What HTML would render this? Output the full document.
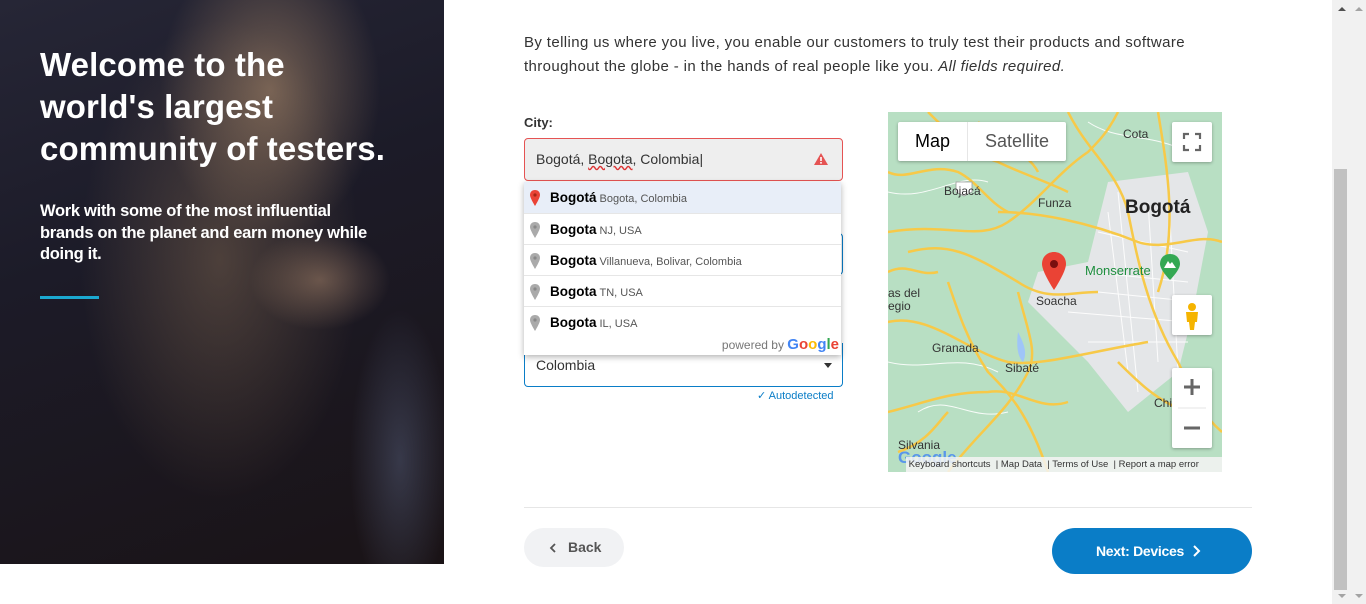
<!DOCTYPE html>
<html><head><meta charset="utf-8"><style>
*{box-sizing:border-box;margin:0;padding:0}
body{width:1366px;height:604px;overflow:hidden;background:#fff;font-family:"Liberation Sans",sans-serif;position:relative;color:#222}
.left{position:absolute;left:0;top:0;width:444px;height:564px;overflow:hidden;
background:radial-gradient(ellipse 110px 150px at 270px 90px,rgba(200,160,120,.5),transparent),
radial-gradient(ellipse 140px 240px at 220px 260px,rgba(150,120,90,.4),transparent),
radial-gradient(ellipse 70px 50px at 320px 280px,rgba(190,150,120,.45),transparent),
radial-gradient(ellipse 50px 150px at 400px 460px,rgba(90,100,130,.45),transparent),
linear-gradient(160deg,#262636 0%,#1c1b28 40%,#1a1316 100%)}
.left h1{position:absolute;left:40px;top:44px;color:#fff;font-size:33px;line-height:42px;font-weight:bold;letter-spacing:.1px}
.left p{position:absolute;left:40px;top:201px;color:#fff;font-size:16.5px;line-height:21.5px;font-weight:bold;white-space:nowrap;letter-spacing:-.3px}
.left .bar{position:absolute;left:40px;top:296px;width:59px;height:3px;background:#1ba8d0}
.intro{position:absolute;left:524px;top:31px;font-size:15px;line-height:24px;color:#333;width:700px;letter-spacing:.38px}
.lbl{position:absolute;left:524px;top:115px;font-size:13px;font-weight:bold;color:#333}
.city{position:absolute;left:524px;top:138px;width:319px;height:43px;border:1px solid #e55353;border-radius:4px;background:#eee;font-size:14px;padding:12px 11px;color:#333}
.warn{position:absolute;right:14px;top:14px}
.under{position:absolute;left:524px;top:233px;width:319px;height:42px;border:1px solid #0a7dc7;border-radius:4px}
.country{position:absolute;left:524px;top:343px;width:319px;height:44px;border:1px solid #0a7dc7;border-top:none;border-radius:0 0 4px 4px;font-size:14px;padding:14px 11px 0;color:#333}
.country .arr{position:absolute;right:10px;top:20px;border:4px solid transparent;border-top:5px solid #333}
.auto{position:absolute;left:757px;top:389px;font-size:11px;color:#0a7dc7}
.dd{position:absolute;left:524px;top:182px;width:317px;height:173px;background:#fff;box-shadow:0 2px 6px rgba(0,0,0,.3);font-size:11px;color:#555}
.it{height:31px;border-top:1px solid #e6e6e6;position:relative;padding-left:26px;line-height:31px}
.it:first-child{border-top:none;background:#e8eef8}
.it b{font-size:13.5px;color:#000;font-weight:bold;margin-right:3px}
.it svg{position:absolute;left:6px;top:8px}
.pw{position:absolute;right:2px;bottom:2px;font-size:12px;color:#777}
.pw span{font-size:15px;font-weight:bold}
.map{position:absolute;left:888px;top:112px;width:334px;height:360px;overflow:hidden;background:#b8dfc3}
.btn{position:absolute;background:#fff;box-shadow:0 1px 3px rgba(0,0,0,.3);border-radius:2px}
.hr{position:absolute;left:524px;top:507px;width:728px;height:1px;background:#e6e6e6}
.back{position:absolute;left:524px;top:528px;width:100px;height:39px;border-radius:20px;background:#f1f2f4;font-size:14px;font-weight:bold;color:#555;line-height:39px;padding-left:44px}
.next{position:absolute;left:1052px;top:528px;width:200px;height:46px;border-radius:23px;background:#0a7dc7;color:#fff;font-size:14px;font-weight:bold;line-height:46px;padding-left:44px;letter-spacing:-.3px}
.sb{position:absolute;left:1332px;top:0;width:34px;height:604px;background:#f1f1f1}
.thumb{position:absolute;left:1334px;top:169px;width:13px;height:421px;background:#c1c1c1}
.lb{position:absolute;font-size:12px;color:#333}
</style></head><body>
<div class="left">
<h1>Welcome to the<br>world's largest<br>community of testers.</h1>
<p>Work with some of the most influential<br>brands on the planet and earn money while<br>doing it.</p>
<div class="bar"></div>
</div>
<div class="intro">By telling us where you live, you enable our customers to truly test their products and software throughout the globe - in the hands of real people like you. <i>All fields required.</i></div>
<div class="lbl">City:</div>
<div class="under"></div>
<div class="city">Bogotá, <span style="text-decoration:underline wavy #d33">Bogota</span>, Colombia|
<svg class="warn" width="14" height="12" viewBox="0 0 14 12"><path d="M7 0L14 12H0Z" fill="#e55353"/><rect x="6.2" y="4" width="1.6" height="4" fill="#fff"/><rect x="6.2" y="9" width="1.6" height="1.6" fill="#fff"/></svg></div>
<div class="country">Colombia<div class="arr"></div></div>
<div class="auto">✓ Autodetected</div>
<div class="dd">
<div class="it"><svg width="10" height="16" viewBox="0 0 10 16"><path d="M5 0C2 0 0 2 0 5c0 3 5 11 5 11s5-8 5-11C10 2 8 0 5 0z" fill="#ea4335"/><circle cx="5" cy="5" r="1.6" fill="#a52714"/></svg><b>Bogotá</b>Bogota, Colombia</div>
<div class="it"><svg width="10" height="16" viewBox="0 0 10 16"><path d="M5 0C2 0 0 2 0 5c0 3 5 11 5 11s5-8 5-11C10 2 8 0 5 0z" fill="#aaa"/><circle cx="5" cy="5" r="1.6" fill="#888"/></svg><b>Bogota</b>NJ, USA</div>
<div class="it"><svg width="10" height="16" viewBox="0 0 10 16"><path d="M5 0C2 0 0 2 0 5c0 3 5 11 5 11s5-8 5-11C10 2 8 0 5 0z" fill="#aaa"/><circle cx="5" cy="5" r="1.6" fill="#888"/></svg><b>Bogota</b>Villanueva, Bolivar, Colombia</div>
<div class="it"><svg width="10" height="16" viewBox="0 0 10 16"><path d="M5 0C2 0 0 2 0 5c0 3 5 11 5 11s5-8 5-11C10 2 8 0 5 0z" fill="#aaa"/><circle cx="5" cy="5" r="1.6" fill="#888"/></svg><b>Bogota</b>TN, USA</div>
<div class="it"><svg width="10" height="16" viewBox="0 0 10 16"><path d="M5 0C2 0 0 2 0 5c0 3 5 11 5 11s5-8 5-11C10 2 8 0 5 0z" fill="#aaa"/><circle cx="5" cy="5" r="1.6" fill="#888"/></svg><b>Bogota</b>IL, USA</div>
<div class="pw">powered by <span><span style="color:#4285f4">G</span><span style="color:#ea4335">o</span><span style="color:#fbbc05">o</span><span style="color:#4285f4">g</span><span style="color:#34a853">l</span><span style="color:#ea4335">e</span></span></div>
</div>
<div class="map">
<svg width="334" height="360" style="position:absolute;left:0;top:0">
<path d="M220 70 L300 60 L320 120 L305 200 L290 260 L240 300 L200 250 L140 190 L150 160 L200 150 Z" fill="#e4e6e8"/>
<g fill="none" stroke="#fff" stroke-width="1" opacity=".9">
<path d="M210 120 L300 140 M200 160 L300 170 M220 100 L240 260 M260 90 L270 250 M180 200 L300 210 M230 80 L250 280 M200 230 L300 230 M280 70 L290 260 M210 180 L310 190"/>
<path d="M0 80 C40 90 70 60 100 70 M20 40 C60 50 90 20 130 30 M0 250 C40 260 70 240 110 260 M30 300 C60 280 80 310 120 300 M200 10 C230 30 260 20 300 40"/>
</g>
<g fill="none" stroke="#f7c948" stroke-width="2.5">
<path d="M0 120 C60 110 90 130 120 110 C150 90 170 60 200 40 C210 30 220 20 230 0"/>
<path d="M20 140 C60 130 80 140 130 170 C160 190 180 180 210 180"/>
<path d="M60 170 C70 200 80 230 100 260 C120 280 140 300 160 360"/>
<path d="M0 210 C40 200 80 240 120 250 C150 255 200 240 260 230"/>
<path d="M180 0 C200 40 230 60 240 100 C250 150 260 200 290 250 C300 270 310 300 334 320"/>
<path d="M130 180 C140 220 150 240 140 260 C120 300 90 320 60 360"/>
<path d="M270 0 C280 60 290 120 270 180"/>
<path d="M110 100 C150 100 200 110 250 130 C280 140 310 120 334 130"/>
<path d="M0 300 C40 290 60 280 100 280 C130 275 150 300 180 290"/>
<path d="M0 60 C20 70 40 50 70 60 C90 70 100 90 120 100"/>
<path d="M40 0 C60 20 80 40 110 50 C130 60 160 70 180 80"/>
<path d="M90 10 C110 30 140 40 150 60"/>
<path d="M0 160 C20 150 30 165 50 160"/>
<path d="M230 250 C250 270 270 290 300 300"/>
<path d="M10 340 C40 330 50 310 60 300"/>
</g>
<path d="M130 220 C135 230 140 240 135 250 C130 245 128 235 130 220z" fill="#9fc5f8"/>
<path d="M166 140c-7 0-12 5-12 12 0 8 12 26 12 26s12-18 12-26c0-7-5-12-12-12z" fill="#ea4335"/>
<circle cx="166" cy="152" r="4" fill="#7a0f0f"/>
<path d="M282 142c-6 0-10 4-10 10 0 6 10 16 10 16s10-10 10-16c0-6-4-10-10-10z" fill="#34a853"/><path d="M276 156 l4 -7 2 3 2 -2 4 6z" fill="#fff"/>
<g fill="#fff" stroke="#999" stroke-width=".8"><path d="M68 30h16v10l-8 4-8-4z"/><path d="M68 70h16v10l-8 4-8-4z"/></g>
</svg>
<div style="position:absolute;left:237px;top:85px;font-size:19px;font-weight:bold;color:#222">Bogotá</div>
<div class="lb" style="left:150px;top:84px">Funza</div>
<div class="lb" style="left:56px;top:72px">Bojacá</div>
<div class="lb" style="left:235px;top:15px">Cota</div>
<div style="position:absolute;left:197px;top:151px;font-size:13px;color:#1e8e3e">Monserrate</div>
<div class="lb" style="left:148px;top:182px">Soacha</div>
<div class="lb" style="left:44px;top:229px">Granada</div>
<div class="lb" style="left:117px;top:249px">Sibaté</div>
<div class="lb" style="left:10px;top:326px">Silvania</div>
<div class="lb" style="left:0;top:175px;line-height:13px">as del<br>egio</div>
<div class="lb" style="left:266px;top:284px">Chip</div>
<div class="btn" style="left:10px;top:10px;width:168px;height:39px;font-size:18px;line-height:39px"><span style="position:absolute;left:17px;color:#000">Map</span><span style="position:absolute;left:69px;top:0;width:1px;height:39px;background:#e6e6e6"></span><span style="position:absolute;left:87px;color:#555">Satellite</span></div>
<div class="btn" style="left:284px;top:10px;width:40px;height:40px"><svg width="40" height="40"><path d="M12 17v-5h5M23 12h5v5M28 23v5h-5M17 28h-5v-5" fill="none" stroke="#666" stroke-width="2.2"/></svg></div>
<div class="btn" style="left:284px;top:183px;width:40px;height:40px"><svg width="40" height="40"><circle cx="20" cy="12" r="4" fill="#f5b400"/><path d="M14 17h12l-1 10h-2l-1 8h-4l-1-8h-2z" fill="#f5b400"/></svg></div>
<div class="btn" style="left:284px;top:256px;width:40px;height:80px"><svg width="40" height="80"><path d="M12 19h16M20 11v16M12 60h16" stroke="#666" stroke-width="3"/><path d="M6 40h28" stroke="#e6e6e6"/></svg></div>
<div style="position:absolute;left:10px;top:336px;font-size:17px;font-weight:bold;color:#4285f4;opacity:.8">Google</div>
<div style="position:absolute;left:18px;top:345px;width:316px;height:15px;background:rgba(245,245,245,.85);font-size:9.5px;color:#333;line-height:15px;white-space:nowrap">&nbsp;Keyboard shortcuts &nbsp;| Map Data &nbsp;| Terms of Use &nbsp;| Report a map error</div>
</div>
<div class="hr"></div>
<div class="back"><svg style="position:absolute;left:25px;top:15px" width="8" height="10"><path d="M6 1L2 5l4 4" fill="none" stroke="#555" stroke-width="1.8"/></svg>Back</div>
<div class="next">Next: Devices<svg style="position:absolute;left:140px;top:17px" width="10" height="12"><path d="M2 1l5 5-5 5" fill="none" stroke="#fff" stroke-width="2"/></svg></div>
<div class="sb"></div><div class="thumb"></div>
<svg style="position:absolute;left:1336px;top:6px" width="30" height="6"><path d="M2 5l4-4 4 4z" fill="#505050"/><path d="M19 5l4-4 4 4z" fill="#a3a3a3"/></svg>
<svg style="position:absolute;left:1336px;top:593px" width="30" height="6"><path d="M2 1l4 4 4-4z" fill="#a3a3a3"/><path d="M19 1l4 4 4-4z" fill="#a3a3a3"/></svg>
</body></html>
